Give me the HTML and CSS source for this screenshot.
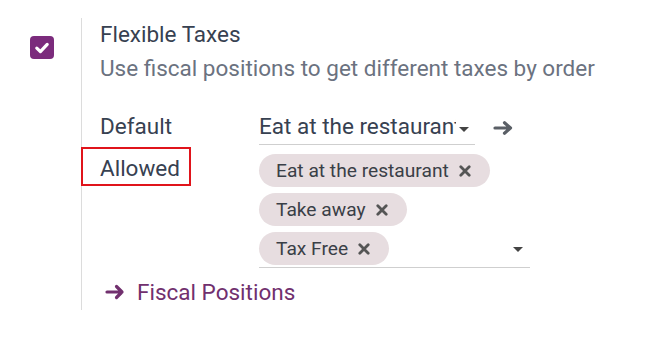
FILE: index.html
```html
<!DOCTYPE html>
<html>
<head>
<meta charset="utf-8">
<link rel="stylesheet" href="styles.css">
</head>
<body>
<div class="setting">
  <div class="setting-left">
    <span class="checkbox">
      <svg viewBox="0 0 24 24" width="24" height="24"><path d="M6.8 12.2 L10.4 15.6 L17.2 8.4" fill="none" stroke="#fff" stroke-width="3.2" stroke-linecap="round" stroke-linejoin="round"/></svg>
    </span>
  </div>
  <div class="setting-right">
    <div class="title">Flexible Taxes</div>
    <div class="desc">Use fiscal positions to get different taxes by order</div>
    <div class="form">
      <div class="label">Default</div>
      <div class="value-row">
        <div class="select">
          <span class="select-text">Eat at the restaurant</span>
          <span class="caret"></span>
        </div>
        <svg class="arrow-btn" viewBox="0 0 20 14" width="20" height="14"><path d="M2 7 H17.5 M11.5 1.8 L17.5 7 L11.5 12.2" fill="none" stroke="#5a5f66" stroke-width="3.2" stroke-linecap="round" stroke-linejoin="round"/></svg>
      </div>
      <div class="label label-allowed"><span class="highlight"></span>Allowed</div>
      <div class="tags-field">
        <div class="tags">
          <span class="tag">Eat at the restaurant<svg viewBox="0 0 12 12" width="12" height="12"><path d="M1.8 1.8 L10.2 10.2 M10.2 1.8 L1.8 10.2" stroke="#555" stroke-width="2.8" stroke-linecap="round"/></svg></span>
          <span class="tag">Take away<svg viewBox="0 0 12 12" width="12" height="12"><path d="M1.8 1.8 L10.2 10.2 M10.2 1.8 L1.8 10.2" stroke="#555" stroke-width="2.8" stroke-linecap="round"/></svg></span>
          <span class="tag">Tax Free<svg viewBox="0 0 12 12" width="12" height="12"><path d="M1.8 1.8 L10.2 10.2 M10.2 1.8 L1.8 10.2" stroke="#555" stroke-width="2.8" stroke-linecap="round"/></svg></span>
        </div>
        <span class="caret caret-tags"></span>
      </div>
    </div>
    <a class="link" href="#"><svg viewBox="0 0 20 16" width="20" height="16"><path d="M2 8 H17 M11.5 2.5 L17 8 L11.5 13.5" fill="none" stroke="#71306e" stroke-width="3.2" stroke-linecap="round" stroke-linejoin="round"/></svg>Fiscal Positions</a>
  </div>
</div>
</body>
</html>
```
FILE: styles.css
```css
* { box-sizing: border-box; }
html, body { margin: 0; padding: 0; background: #fff; }
body {
  font-family: Roboto, "Noto Sans", sans-serif;
  font-size: 22.5px;
  color: #374151;
  width: 667px;
  height: 349px;
  overflow: hidden;
}
.setting {
  display: flex;
  padding-top: 18px;
}
.setting-left {
  width: 81px;
  padding: 18px 0 0 30px;
}
.checkbox {
  display: block;
  width: 24px;
  height: 23px;
  border-radius: 4px;
  background: #7b2b7c;
}
.checkbox svg { display: block; }
.setting-right {
  border-left: 1px solid #dcdcdc;
  padding-left: 18px;
  height: 292px;
  width: 570px;
}
.title {
  line-height: 32px;
}
.desc {
  color: #6b7280;
  line-height: 32px;
  margin-top: 2px;
}
.form {
  display: grid;
  grid-template-columns: 159px 1fr;
  margin-top: 26px;
  row-gap: 9px;
}
.label {
  line-height: 32px;
  position: relative;
}
.label-allowed { line-height: 28px; }
.highlight {
  position: absolute;
  left: -19px;
  top: -7px;
  width: 110px;
  height: 39px;
  border: 2.5px solid #e0141b;
}
.value-row {
  display: flex;
  align-items: center;
}
.select {
  width: 216px;
  line-height: 32px;
  padding-bottom: 2px;
  border-bottom: 1px solid #cfcfcf;
  display: flex;
  align-items: center;
}
.select-text {
  white-space: nowrap;
  overflow: hidden;
  width: 197px;
}
.caret {
  display: inline-block;
  width: 0;
  height: 0;
  border-left: 5px solid transparent;
  border-right: 5px solid transparent;
  border-top: 5px solid #444;
  margin-left: 3px;
  margin-top: 6px;
}
.arrow-btn { margin-left: 18px; }
.tags-field {
  width: 271px;
  display: flex;
  align-items: flex-end;
  justify-content: space-between;
  border-bottom: 1px solid #cfcfcf;
  padding-bottom: 2px;
}
.tags {
  display: flex;
  flex-direction: column;
  align-items: flex-start;
  gap: 6px;
}
.tag {
  display: inline-flex;
  align-items: center;
  height: 33px;
  border-radius: 17px;
  background: #e7dde0;
  padding: 0 19px 0 17px;
  font-size: 19.2px;
  color: #3a3f47;
}
.tag svg { margin-left: 10px; }
.caret-tags { margin: 0 7px 13px 0; }
.link {
  display: flex;
  align-items: center;
  margin-top: 8px;
  margin-left: 5px;
  color: #71306e;
  text-decoration: none;
  line-height: 32px;
}
.link svg { margin-right: 12px; }
```
